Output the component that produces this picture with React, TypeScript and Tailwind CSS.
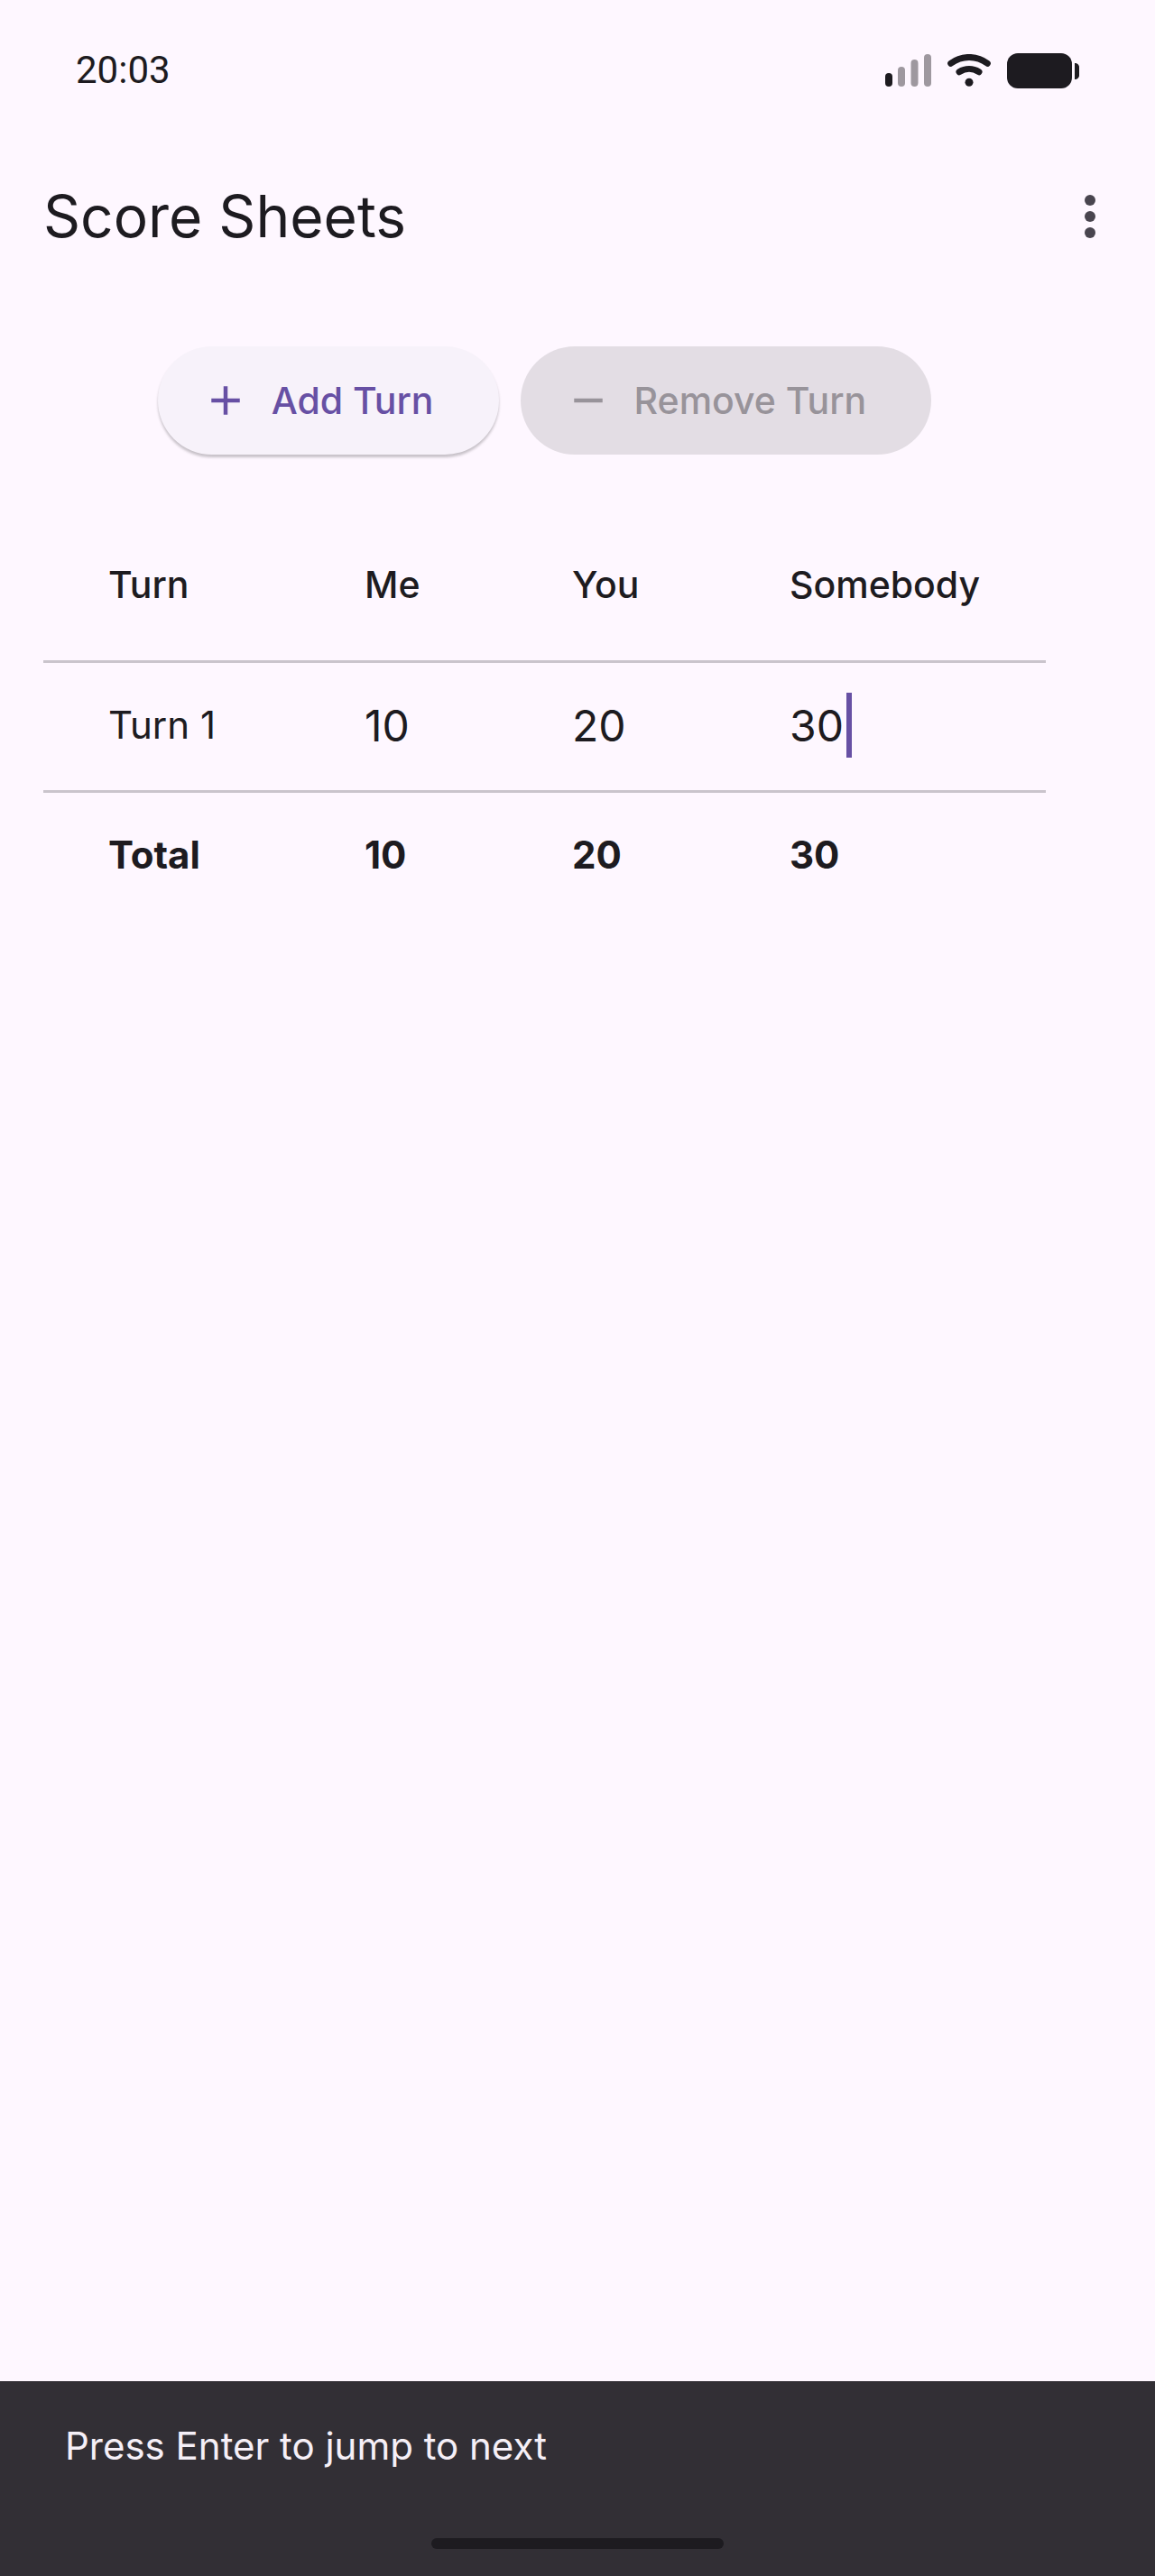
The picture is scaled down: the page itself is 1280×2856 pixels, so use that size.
import React, { useState } from "react";

const players = ["Me", "You", "Somebody"];

function SignalIcon() {
    return (
        <svg className="h-9 w-[51px]" viewBox="0 0 51 36" aria-hidden="true">
            <rect x="0" y="21" width="8" height="15" rx="4" fill="#1d1b20" />
            <rect x="14" y="14" width="8" height="22" rx="4" fill="#9e989f" />
            <rect x="28.5" y="6" width="8" height="30" rx="4" fill="#9e989f" />
            <rect x="43" y="0" width="8" height="36" rx="4" fill="#9e989f" />
        </svg>
    );
}

function WifiIcon() {
    return (
        <svg className="h-9 w-12" viewBox="0 0 48 36" fill="none" aria-hidden="true">
            <path
                d="M3.7 10.3a33.5 33.5 0 0 1 40.6 0M13 19.7a21 21 0 0 1 22 0"
                stroke="#1d1b20"
                strokeWidth="7"
                strokeLinecap="round"
            />
            <circle cx="24" cy="31.3" r="4.5" fill="#1d1b20" />
        </svg>
    );
}

function BatteryIcon() {
    return (
        <svg className="h-[39px] w-20" viewBox="0 0 80 39" fill="#1d1b20" aria-hidden="true">
            <rect x="0" y="0" width="72" height="39" rx="12" />
            <path d="M75 11c3 0 5 2 5 4.500v9c0 2.500-2 4.500-5 4.500z" />
        </svg>
    );
}

export default function App() {
    const [scores, setScores] = useState(["10", "20", "30"]);

    const updateScore = (index: number, value: string) => {
        setScores(scores.map((score, i) => (i === index ? value : score)));
    };

    return (
        <div className="flex min-h-screen flex-col bg-[#fef7ff] font-['Inter',sans-serif] text-[#1d1b20]">

            {/* Status bar */}
            <div className="flex h-36 items-center justify-between pt-3 pr-[84px] pl-[84px]">
                <span className="font-['Roboto',sans-serif] text-[42px] leading-[60px]">20:03</span>
                <div className="flex items-center gap-[18px]">
                    <SignalIcon />
                    <WifiIcon />
                    <BatteryIcon />
                </div>
            </div>

            {/* App bar */}
            <header className="flex h-48 items-center justify-between pr-9 pl-12">
                <h1 className="text-[64px] leading-[84px]">Score Sheets</h1>
                <button type="button" aria-label="More options" className="rounded-full">
                    <svg className="h-[72px] w-[72px]" viewBox="0 0 24 24" fill="#49454f">
                        <circle cx="12" cy="6" r="2" />
                        <circle cx="12" cy="12" r="2" />
                        <circle cx="12" cy="18" r="2" />
                    </svg>
                </button>
            </header>

            <main className="w-fit px-12 pt-12">
                {/* Turn actions */}
                <div className="flex justify-center gap-6">
                    <button
                        type="button"
                        className="flex h-[120px] items-center gap-6 rounded-full bg-[#f7f2fa] pr-[72px] pl-12 text-[41px] leading-[60px] font-medium text-[#6750a4] shadow-[0_3px_3px_rgba(0,0,0,0.22)]"
                    >
                        <svg className="h-[54px] w-[54px]" viewBox="0 0 24 24" fill="currentColor" aria-hidden="true">
                            <path d="M19 13h-6v6h-2v-6H5v-2h6V5h2v6h6z" />
                        </svg>
                        Add Turn
                    </button>
                    <button
                        type="button"
                        disabled
                        className="flex h-[120px] items-center gap-6 rounded-full bg-[#e3dde4] pr-[72px] pl-12 text-[41px] leading-[60px] font-medium text-[#98939a]"
                    >
                        <svg className="h-[54px] w-[54px]" viewBox="0 0 24 24" fill="currentColor" aria-hidden="true">
                            <path d="M19 13H5v-2h14z" />
                        </svg>
                        Remove Turn
                    </button>
                </div>

                {/* Score table */}
                <table className="mt-[60px] border-separate border-spacing-0 text-left text-[42px] leading-[60px]">
                    <thead>
                        <tr className="h-[168px] text-[41px]">
                            <th scope="col" className="w-[272px] pl-[72px] font-medium">Turn</th>
                            <th scope="col" className="w-[230px] pl-[84px] font-medium">{players[0]}</th>
                            <th scope="col" className="w-[241px] pl-[84px] font-medium">{players[1]}</th>
                            <th scope="col" className="w-[368px] pl-[84px] font-medium">{players[2]}</th>
                        </tr>
                    </thead>
                    <tbody>
                        <tr className="h-36">
                            <th scope="row" className="border-t-3 border-[#cac4cc] pb-[3px] pl-[72px] font-normal">Turn 1</th>
                            {scores.map((score, i) => (
                                <td key={players[i]} className="border-t-3 border-[#cac4cc] pb-[3px] pl-[84px]">
                                    <div className="relative flex w-fit">
                                        <input
                                            type="text"
                                            inputMode="numeric"
                                            aria-label={`${players[i]}, turn 1`}
                                            value={score}
                                            onChange={(e) => updateScore(i, e.target.value)}
                                            className="h-[72px] w-[63px] bg-transparent text-[48px] caret-[#6750a4] outline-none"
                                        />
                                        {i === players.length - 1 && (
                                            <span className="absolute top-0 left-full h-full w-[6px] bg-[#6750a4]" />
                                        )}
                                    </div>
                                </td>
                            ))}
                        </tr>
                        <tr className="h-36 font-bold">
                            <th scope="row" className="border-t-3 border-[#cac4cc] pb-[3px] pl-[72px]">Total</th>
                            {scores.map((score, i) => (
                                <td key={players[i]} className="border-t-3 border-[#cac4cc] pb-[3px] pl-[84px]">
                                    {score}
                                </td>
                            ))}
                        </tr>
                    </tbody>
                </table>
            </main>

            {/* Snackbar */}
            <footer className="mt-auto flex h-[216px] flex-col justify-between bg-[#322f35] pt-[42px] pb-[30px]">
                <p role="status" className="px-[72px] text-[42px] leading-[60px] text-[#f5eff7]">
                    Press Enter to jump to next
                </p>
                <div className="mx-auto h-3 w-[324px] rounded-full bg-[#1d1b20]" />
            </footer>
        </div>
    );
}
